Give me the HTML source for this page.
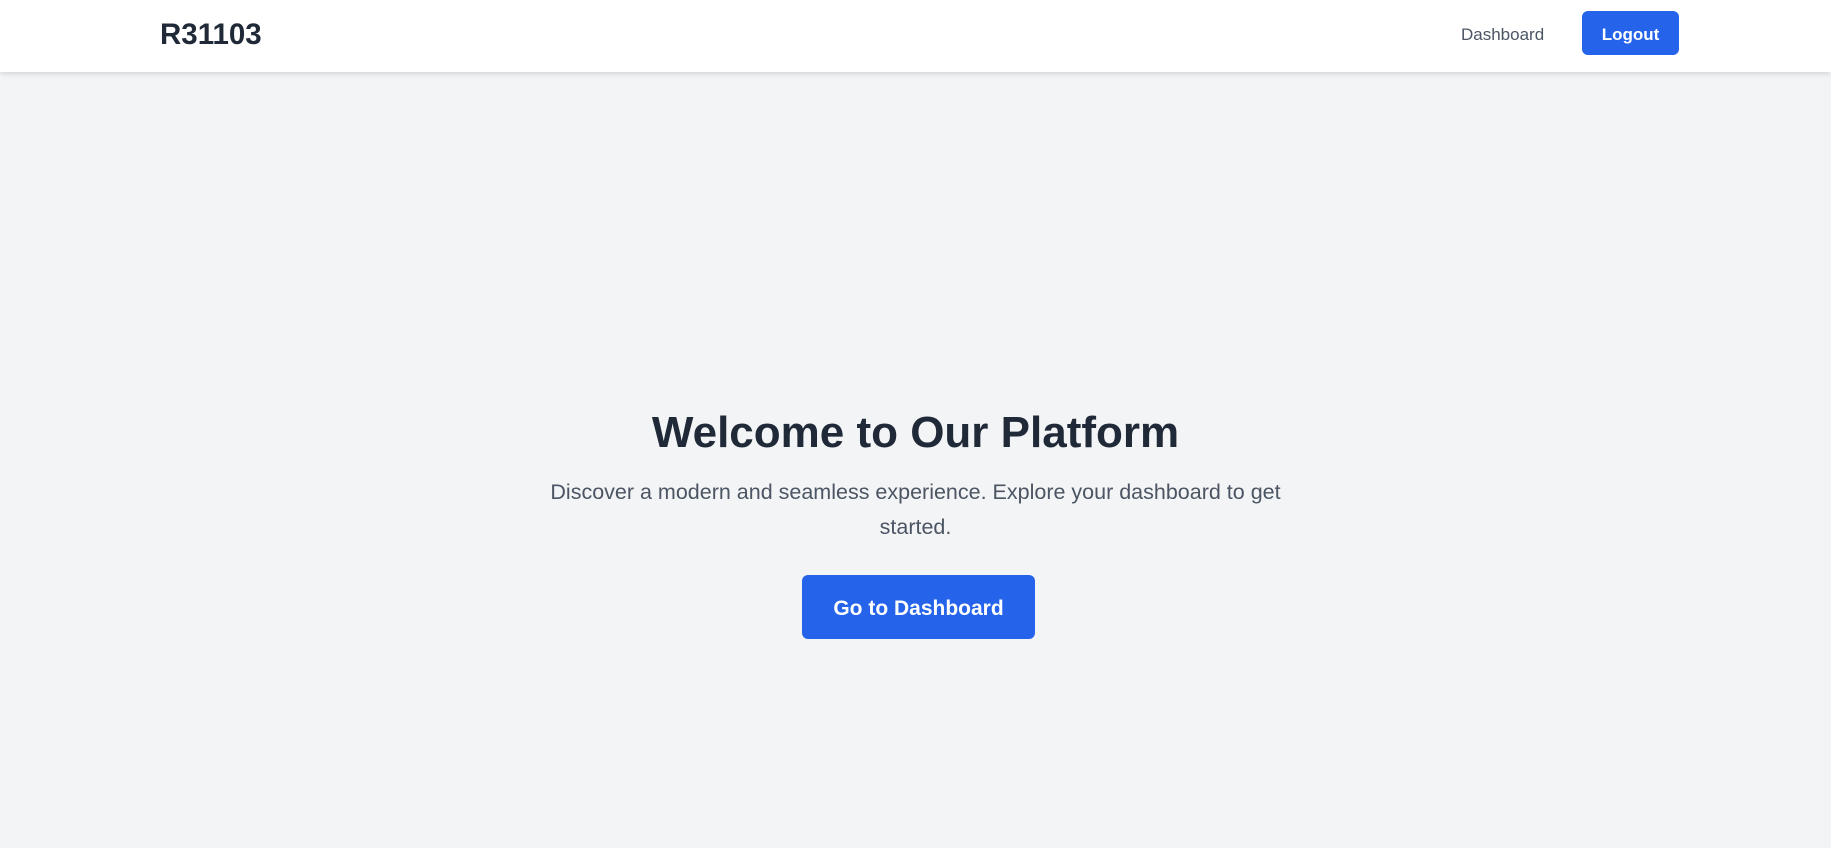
<!DOCTYPE html>
<html><head><meta charset="utf-8"><style>
*{margin:0;padding:0;box-sizing:border-box}
body{width:1831px;height:848px;background:#f3f4f6;font-family:"Liberation Sans",sans-serif;position:relative;overflow:hidden}
header{position:absolute;left:0;top:0;width:1831px;height:72px;background:#fff;box-shadow:0 2px 5px rgba(0,0,0,.12)}
.logo{position:absolute;left:160px;top:17px;font-size:29.5px;font-weight:bold;color:#1f2937;line-height:36px}
.dash{position:absolute;left:1461px;top:24px;font-size:17px;color:#4b5563;line-height:22px}
.logout{position:absolute;left:1582px;top:11px;width:97px;height:44px;padding-top:4px;background:#2563eb;border-radius:6px;color:#fff;font-weight:bold;font-size:17px;display:flex;align-items:center;justify-content:center}
h1{position:absolute;left:0;width:1831px;top:405px;text-align:center;font-size:44px;line-height:56px;color:#1f2937;font-weight:bold}
p{position:absolute;left:0;width:1831px;top:475px;text-align:center;font-size:21.5px;line-height:35px;color:#4b5563}
.btn{position:absolute;left:802px;top:575px;width:233px;height:64px;padding-top:3px;background:#2563eb;border-radius:6px;color:#fff;font-size:21px;font-weight:bold;display:flex;align-items:center;justify-content:center}
</style></head><body>
<header><div class="logo">R31103</div><div class="dash">Dashboard</div><div class="logout">Logout</div></header>
<h1>Welcome to Our Platform</h1>
<p>Discover a modern and seamless experience. Explore your dashboard to get<br>started.</p>
<div class="btn">Go to Dashboard</div>
</body></html>
